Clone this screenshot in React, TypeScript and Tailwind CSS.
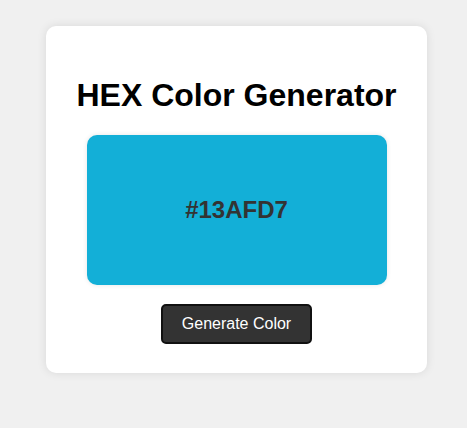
import React from "react";

export default function App() {
  return (
    <div
      className="min-h-[428px] w-full bg-[#f0f0f0] pt-[26px] pl-[46px]"
      style={{ fontFamily: '"Liberation Sans", Arial, sans-serif' }}
    >
      <div className="flex w-[381px] flex-col items-center rounded-[10px] bg-white px-[40px] pt-[30px] pb-[29px] shadow-[0_0_10px_rgba(0,0,0,0.1)]">
        <h1 className="my-[21px] whitespace-nowrap text-center text-[32px] font-bold leading-[37px] text-black">
          HEX Color Generator
        </h1>
        <div className="flex h-[150px] w-[300px] items-center justify-center rounded-[10px] bg-[#13AFD7] shadow-[0_0_5px_rgba(0,0,0,0.1)]">
          <span className="text-[24px] font-bold text-[#333]">#13AFD7</span>
        </div>
        <button className="mt-[19px] h-[40px] w-[151px] rounded-[5px] border-2 border-[#111] bg-[#333] text-[16px] text-white">
          Generate Color
        </button>
      </div>
    </div>
  );
}
